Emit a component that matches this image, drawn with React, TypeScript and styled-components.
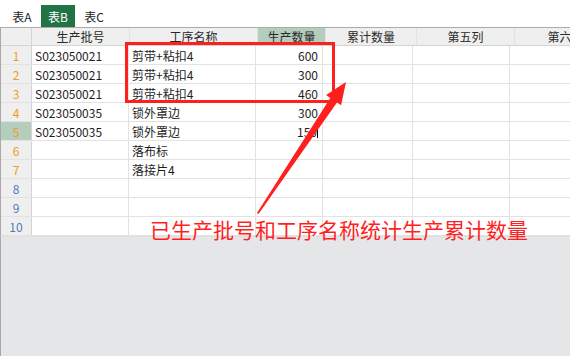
import styled, { createGlobalStyle } from 'styled-components';

const GlobalStyle = createGlobalStyle`
  html, body {
    margin: 0;
    padding: 0;
    background: #ffffff;
  }
  body {
    font-family: "Noto Sans CJK SC", "Liberation Sans", sans-serif;
  }
`;

const Palette = {
  Green: '#217346',
  HeadBg: '#EFEFEF',
  HeadActive: '#B5CDBD',
  Line: '#E2E2E2',
  HeadLine: '#D4D4D4',
  Orange: '#F29B1D',
  Blue: '#4D7CB5',
  Text: '#1E1E1E',
  Red: '#FF1F1F',
  Empty: '#E5E6E8',
};

const columns = [
  { key: 'A', title: '生产批号', width: 98 },
  { key: 'B', title: '工序名称', width: 128 },
  { key: 'C', title: '生产数量', width: 68 },
  { key: 'D', title: '累计数量', width: 91 },
  { key: 'E', title: '第五列', width: 98 },
  { key: 'F', title: '第六列', width: 102 },
];

type RowData = { batch?: string; step?: string; qty?: string; caret?: boolean };

const rows: RowData[] = [
  { batch: 'S023050021', step: '剪带+粘扣4', qty: '600' },
  { batch: 'S023050021', step: '剪带+粘扣4', qty: '300' },
  { batch: 'S023050021', step: '剪带+粘扣4', qty: '460' },
  { batch: 'S023050035', step: '锁外罩边', qty: '300' },
  { batch: 'S023050035', step: '锁外罩边', qty: '150', caret: true },
  { step: '落布标' },
  { step: '落接片4' },
  {},
  {},
  {},
];

const App = () => {
  return (
    <Page>
      <GlobalStyle />
      <TabBar>
        <Tab>表A</Tab>
        <Tab $active>表B</Tab>
        <Tab>表C</Tab>
      </TabBar>
      <Sheet>
        <HeadRow>
          <RowHead $head />
          {columns.map((c) => (
            <ColHead key={c.key} $w={c.width} $active={c.key === 'C'}>
              {c.title}
            </ColHead>
          ))}
        </HeadRow>
        {rows.map((r, i) => (
          <Row key={i}>
            <RowHead $active={i === 4} $blue={i >= 7}>
              {i + 1}
            </RowHead>
            <Cell $w={columns[0].width}>{r.batch}</Cell>
            <Cell $w={columns[1].width}>{r.step}</Cell>
            <Cell $w={columns[2].width} $right>
              {r.qty}
              {r.caret && <Caret />}
            </Cell>
            <Cell $w={columns[3].width} />
            <Cell $w={columns[4].width} />
            <Cell $w={columns[5].width} />
          </Row>
        ))}
      </Sheet>
      <Filler />
      <Markup width="570" height="356" viewBox="0 0 570 356">
        <rect
          x="126.5"
          y="43.5"
          width="207"
          height="58"
          fill="none"
          stroke={Palette.Red}
          strokeWidth="3"
        />
        <polygon
          points="257,213 330.3,97.9 326.1,95.1 346,82 341.1,105.3 337,102.5 258.5,214"
          fill={Palette.Red}
        />
      </Markup>
      <Note>已生产批号和工序名称统计生产累计数量</Note>
    </Page>
  );
};

export default App;

const Page = styled.div`
  position: relative;
  width: 570px;
  height: 356px;
  overflow: hidden;
  display: flex;
  flex-direction: column;
  background: #ffffff;
`;

const TabBar = styled.div`
  height: 27px;
  flex-shrink: 0;
  display: flex;
  align-items: flex-end;
  padding-left: 5px;
  gap: 2px;
  border-bottom: 1px solid #ABABAB;
  box-sizing: content-box;
`;

const Tab = styled.div<{ $active?: boolean }>`
  width: 34px;
  height: 22px;
  display: flex;
  align-items: center;
  justify-content: center;
  font-size: 12px;
  color: ${(p) => (p.$active ? '#ffffff' : Palette.Text)};
  background: ${(p) => (p.$active ? Palette.Green : 'transparent')};
`;

const Sheet = styled.div`
  display: flex;
  flex-direction: column;
  border-left: 1px solid #A9A9A9;
  flex-shrink: 0;
`;

const HeadRow = styled.div`
  display: flex;
  height: 17px;
  border-bottom: 1px solid ${Palette.HeadLine};
  background: ${Palette.HeadBg};
`;

const Row = styled.div`
  display: flex;
  height: 18px;
  border-bottom: 1px solid ${Palette.Line};
`;

const RowHead = styled.div<{ $head?: boolean; $active?: boolean; $blue?: boolean }>`
  width: 30px;
  flex-shrink: 0;
  display: flex;
  align-items: center;
  justify-content: center;
  font-size: 12px;
  color: ${(p) => (p.$blue ? Palette.Blue : Palette.Orange)};
  background: ${(p) => (p.$active ? Palette.HeadActive : Palette.HeadBg)};
  border-right: 1px solid ${Palette.HeadLine};
`;

const ColHead = styled.div<{ $w: number; $active?: boolean }>`
  width: ${(p) => p.$w - 1}px;
  flex-shrink: 0;
  display: flex;
  align-items: center;
  justify-content: center;
  font-size: 12px;
  color: #2A2A2A;
  background: ${(p) => (p.$active ? Palette.HeadActive : Palette.HeadBg)};
  border-right: 1px solid ${Palette.Line};
`;

const Cell = styled.div<{ $w: number; $right?: boolean }>`
  position: relative;
  width: ${(p) => p.$w - 1}px;
  flex-shrink: 0;
  display: flex;
  align-items: center;
  justify-content: ${(p) => (p.$right ? 'flex-end' : 'flex-start')};
  padding: 0 4px 0 3px;
  box-sizing: border-box;
  font-size: 12px;
  color: ${Palette.Text};
  border-right: 1px solid ${Palette.Line};
  white-space: nowrap;
`;

const Caret = styled.span`
  width: 1px;
  height: 13px;
  background: #000000;
`;

const Filler = styled.div`
  flex: 1;
  background: ${Palette.Empty};
  border-left: 1px solid #A9A9A9;
  border-top: 1px solid #E0E0E0;
`;

const Markup = styled.svg`
  position: absolute;
  left: 0;
  top: 0;
  pointer-events: none;
`;

const Note = styled.div`
  position: absolute;
  left: 150px;
  top: 215px;
  font-size: 21px;
  line-height: 28px;
  color: ${Palette.Red};
  white-space: nowrap;
  pointer-events: none;
`;
